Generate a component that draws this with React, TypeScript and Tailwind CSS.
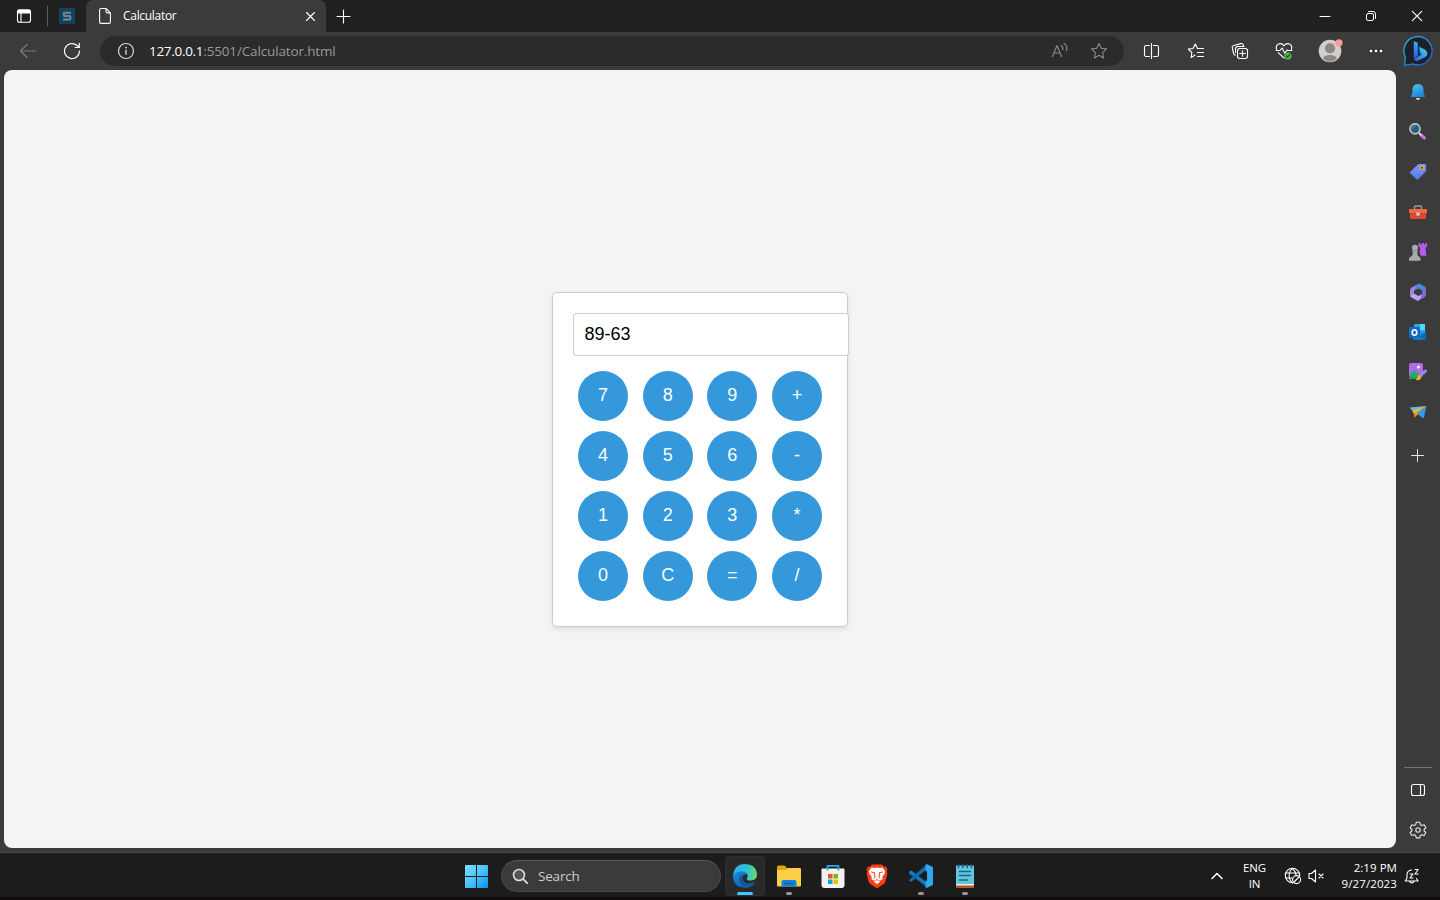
import React from "react";

type IconProps = { w: number; h: number; className?: string; children: React.ReactNode };

function Icon({ w, h, className = "text-white", children }: IconProps) {
  return (
    <svg
      width={w}
      height={h}
      viewBox={`0 0 ${w} ${h}`}
      className={`block shrink-0 ${className}`}
      fill="none"
      stroke="currentColor"
      strokeWidth="1.1"
      strokeLinecap="round"
      strokeLinejoin="round"
    >
      {children}
    </svg>
  );
}

function TabStrip() {
  return (
    <header className="flex h-8 w-full bg-[#202020]">
      <div className="flex w-[86px] items-center">
        <div className="flex w-12 items-center justify-center">
          <Icon w={16} h={16}>
            <rect x="1.5" y="1.8" width="13" height="12.4" rx="2" />
            <path d="M2 2.6h12v2.4H2z" fill="currentColor" />
            <path d="M5 5v9" />
          </Icon>
        </div>
        <div className="-ml-px h-5 w-px bg-[#5c5c5c]" />
        <div className="ml-[11px] flex h-4 w-4 items-center justify-center bg-[#12425f]">
          <Icon w={16} h={16} className="text-[#7b8790]">
            <path d="M12 4.7H5.700q-.9 0-.9.900v1.500q0 .9.900.9h4.800q.9 0 .9.900v1.700q0 .9-.9.900H4" strokeWidth="2" strokeLinecap="butt" />
          </Icon>
        </div>
      </div>
      <div className="flex w-[240px] items-center rounded-t-[7px] bg-[#3b3b3b] pl-3">
        <Icon w={14} h={18}>
          <path d="M3 1.500h5l4.400 4.400v9.100q0 1.400-1.400 1.400H3q-1.400 0-1.400-1.400V2.900Q1.600 1.500 3 1.500zM8 1.700v3q0 1.200 1.200 1.200h3" />
        </Icon>
        <span className="ml-[11px] w-[180px] font-['Open_Sans',sans-serif] text-[12px] leading-4 tracking-[-0.3px] text-white">
          Calculator
        </span>
        <Icon w={14} h={14}>
          <path d="m3.500 3.500 8 8m0-8-8 8" />
        </Icon>
      </div>
      <div className="flex w-[35px] items-center justify-center">
        <Icon w={15} h={15}>
          <path d="M7.500 1v13M1 7.500h13" />
        </Icon>
      </div>
      <div className="ml-auto flex">
        <div className="flex w-[46px] items-center justify-center">
          <Icon w={12} h={12}><path d="M1 6.500h10" strokeWidth="1" /></Icon>
        </div>
        <div className="flex w-[46px] items-center justify-center">
          <Icon w={12} h={12}>
            <rect x="1.500" y="3.500" width="7" height="7" rx="1.500" strokeWidth="1" />
            <path d="M3.500 1.500H8q2.500 0 2.500 2.500v4.500" strokeWidth="1" />
          </Icon>
        </div>
        <div className="flex w-[46px] items-center justify-center">
          <Icon w={12} h={12}><path d="m1.300 1.300 9.400 9.400m0-9.400-9.400 9.400" /></Icon>
        </div>
      </div>
    </header>
  );
}

function Toolbar() {
  return (
    <div className="flex h-[38px] w-full items-center bg-[#3b3b3b]">
      <div className="flex w-14 justify-center">
        <Icon w={18} h={16} className="text-[#7c7c7c]"><path d="M17 8H1.500M8 1.500 1.500 8 8 14.500" /></Icon>
      </div>
      <div className="flex w-8 justify-center">
        <Icon w={18} h={18}>
          <path d="M16.500 9A7.500 7.500 0 1 1 13.800 3.300L16 5.300M16.300 1.300v4.200h-4.200" strokeWidth="1.200" />
        </Icon>
      </div>
      <div className="ml-3 flex h-[30px] w-[1024px] items-center rounded-full bg-[#2b2b2b] pl-[17px] pr-4">
        <Icon w={18} h={18} className="text-[#d8d8d8]">
          <circle cx="9" cy="9" r="7.500" strokeWidth="1.200" />
          <path d="M9 8.200v4" strokeWidth="1.300" />
          <circle cx="9" cy="5.600" r=".4" />
        </Icon>
        <span className="ml-[14px] whitespace-nowrap font-['Open_Sans',sans-serif] text-[13.5px] leading-5 tracking-[-0.15px] text-[#999]">
          <span className="tracking-[-0.3px] text-white">127.0.0.1</span>:5501/Calculator.html
        </span>
        <div className="ml-auto flex items-center gap-[21px]">
          <Icon w={18} h={18} className="text-[#8c8c8c]">
            <path d="m1.500 14.500 4.500-11 4.500 11M3 11h6M10 3.500q2.400 1.500 1.800 4.300M13 1.500q4.300 2.800 2.300 7.300" />
          </Icon>
          <Icon w={18} h={18} className="text-[#8c8c8c]">
            <path d="m9 1.500 2.200 4.800 5.300.6-3.900 3.700 1 5.400L9 13.300 4.400 16l1-5.400-3.900-3.700 5.300-.6z" />
          </Icon>
        </div>
      </div>
      <div className="ml-[6px] flex w-11 items-center justify-center">
        <Icon w={18} h={18}>
          <path d="M6.500 3.500H3.300q-1.800 0-1.800 1.800v7.400q0 1.800 1.800 1.800h3.200M10.500 3.500h3.200q1.800 0 1.800 1.800v7.400q0 1.800-1.800 1.800h-3.200M8.500 1.500v15" />
        </Icon>
      </div>
      <div className="flex w-11 items-center justify-center">
        <Icon w={18} h={18}>
          <path d="M8 13 4.200 15.600 4.800 10.500 1.300 7.100 6 6.500 8.300 2l2.200 4.500h6M10.500 10.500h6M10.500 14.500h6" />
        </Icon>
      </div>
      <div className="flex w-11 items-center justify-center">
        <Icon w={18} h={18}>
          <path d="M4.200 13.200q-1.400-.6-1.700-2L1.300 5.800q-.4-1.900 1.500-2.300l7-1.900q1.900-.4 2.500 1.400l.2.700" />
          <rect x="6.500" y="6.500" width="10" height="10" rx="2.200" />
          <path d="M11.500 8.700v5.600M8.700 11.500h5.600M4.500 10.500V6.800q0-2.300 2.300-2.300h6.200" />
        </Icon>
      </div>
      <div className="flex w-11 items-center justify-center">
        <Icon w={18} h={18}>
          <path d="M1.600 7.500C-.2 2 6-.4 9 3.800c3-4.200 9.200-1.800 7.400 3.700M3.200 10.600 9 16M1 8.500h4L7 6l2.800 5.300L12 8l1 .5h4" />
          <circle cx="12.900" cy="14" r="3.500" fill="#4caf50" stroke="#4caf50" strokeWidth=".5" />
          <path d="m11.500 14 1 1 2-2.200" stroke="#1d4a20" />
        </Icon>
      </div>
      <div className="flex w-12 items-center justify-center">
        <Icon w={26} h={26}>
          <circle cx="13" cy="13" r="11.300" fill="#d1cfcc" stroke="none" />
          <circle cx="13" cy="10.300" r="5.100" fill="#8c8884" stroke="none" />
          <path d="M6 20.500Q7 17 13 17t7 3.500Q13 27.200 6 20.500z" fill="#8c8884" stroke="none" />
          <circle cx="22" cy="4.800" r="3.600" fill="#ff9b91" stroke="none" />
        </Icon>
      </div>
      <div className="flex w-11 items-center justify-center">
        <Icon w={16} h={6}>
          <g fill="currentColor" stroke="none"><circle cx="3" cy="3" r="1.300" /><circle cx="8" cy="3" r="1.300" /><circle cx="13" cy="3" r="1.300" /></g>
        </Icon>
      </div>
      <div className="flex w-[42px] items-center justify-center">
        <Icon w={32} h={32}>
          <defs>
            <linearGradient id="ring" x1="0" y1="0" x2="1" y2="1"><stop stopColor="#25c8ed" /><stop offset="1" stopColor="#2353dc" /></linearGradient>
            <linearGradient id="stem" x1="0" y1="0" x2="0" y2="1"><stop stopColor="#2cb5f5" /><stop offset="1" stopColor="#2458ee" /></linearGradient>
            <linearGradient id="bowl" x1="0" y1="1" x2="1" y2="0"><stop stopColor="#2558ed" /><stop offset="1" stopColor="#3bdcf0" /></linearGradient>
          </defs>
          <path d="M1.600 30.200 2.300 22A14.100 14.100 0 1 1 9.500 28.800q-3.500 1.600-7.900 1.400z" fill="#1e2228" stroke="url(#ring)" strokeWidth="1.300" />
          <path d="m10.800 6.200 4 1.500v13l-4 3.300z" fill="url(#stem)" stroke="none" />
          <path d="m16 11.800 5 2.200q3.300 1.700 3.300 4.800 0 2-1.900 3.200L14.500 26q-2.300.6-3.700-2l7.300-4.300-1.300-2.800z" fill="url(#bowl)" stroke="none" />
        </Icon>
      </div>
    </div>
  );
}

const keys = ["7", "8", "9", "+", "4", "5", "6", "-", "1", "2", "3", "*", "0", "C", "=", "/"];

function CalculatorPage() {
  return (
    <main className="flex h-[778px] w-[1392px] items-center justify-center rounded-lg bg-[#f4f4f4] font-['Liberation_Sans',sans-serif]">
      <section className="mt-[1px] h-[335px] w-[296px] rounded-[5px] border border-[#ccc] bg-white pl-5 pt-5 shadow-[0_2px_5px_rgba(0,0,0,0.1)]">
        <div className="flex h-[43px] w-[276px] items-center rounded-[3px] border border-[#ccc] bg-white px-[10.5px] pb-[2px] text-[18px] leading-none text-black">
          89-63
        </div>
        <div className="ml-[5px] mt-[15px] grid w-[244px] grid-cols-[repeat(4,50px)] justify-between gap-y-[10px]">
          {keys.map((key) => (
            <button key={key} className="h-[50px] w-[50px] rounded-full bg-[#3498db] pb-[3px] text-center text-[18px] leading-5 text-white">
              {key}
            </button>
          ))}
        </div>
      </section>
    </main>
  );
}

function SideItem({ children }: { children: React.ReactNode }) {
  return <div className="flex h-10 items-center pt-1">{children}</div>;
}

function Sidebar() {
  return (
    <aside className="flex h-full w-11 flex-col items-center bg-[#3b3b3b]">
      <SideItem>
        <Icon w={18} h={18}>
          <defs><linearGradient id="bell" x2=".5" y2="1"><stop stopColor="#4fc5f7" /><stop offset="1" stopColor="#1d86d9" /></linearGradient></defs>
          <path d="M2 13.300 3.400 10V7q.2-5.800 5.600-6 5.400.2 5.600 6v3l1.400 3.300q0 .8-.8.8H2.800q-.8 0-.8-.8z" fill="url(#bell)" stroke="none" />
          <path d="M6.800 15h4.400q-.4 2-2.200 2t-2.200-2z" fill="#d5d5d5" stroke="none" />
        </Icon>
      </SideItem>
      <SideItem>
        <Icon w={18} h={18}>
          <path d="m12 12 3.500 3" stroke="#cc70ea" strokeWidth="3" />
          <path d="m10 10 2 1.800" stroke="#ddd" strokeWidth="1.800" />
          <circle cx="6" cy="5.800" r="5" fill="#235f7e" stroke="#bbbdbd" strokeWidth="1.700" />
          <path d="M3.500 5.500Q4 3 6.500 3" stroke="#4b94b6" />
        </Icon>
      </SideItem>
      <SideItem>
        <Icon w={18} h={18}>
          <defs><linearGradient id="tag" x1="1" y2="1"><stop stopColor="#8594f6" /><stop offset="1" stopColor="#527ced" /></linearGradient></defs>
          <path d="m1.400 8.700 7.500-7.100q.7-.7 1.700-.7l5 .1q1.500 0 1.500 1.500L17 7.500q0 .9-.7 1.600l-6.900 7q-1 1-2 0l-6-5.500q-1-.9 0-1.900z" fill="url(#tag)" stroke="none" />
          <circle cx="13" cy="4.800" r="1.700" fill="#343c70" stroke="#eabd2d" />
        </Icon>
      </SideItem>
      <SideItem>
        <Icon w={18} h={18}>
          <path d="M5.500 6V4q0-1 1-1h5q1 0 1 1v2" stroke="#9c9c9c" strokeWidth="1.400" />
          <rect x="0" y="6" width="18" height="4.500" rx="1" fill="#f16740" stroke="none" />
          <path d="M1 10.500h16v4q0 1.500-1.500 1.500h-13Q1 16 1 14.500z" fill="#d9492d" stroke="none" />
          <path d="M7.200 9.500h3.600V12q-1.800 1.700-3.600 0z" fill="#ccc" stroke="none" />
        </Icon>
      </SideItem>
      <SideItem>
        <Icon w={18} h={18}>
          <g fill="#aaa" stroke="none"><circle cx="6" cy="4.800" r="3" /><path d="M3 7.500h6v1.300H8l.8 3.700 2.700 2.500v2.700H0v-2.700l3.300-2.500.8-3.700H3z" /></g>
          <path d="M9.500 0h2v1.500H13V0h2v1.500h1.300V0H18v3.500l-1.500 1.300.8 8H12l-1.300-2.500.5-5.500-1.700-1.300z" fill="#b45bf0" stroke="none" />
        </Icon>
      </SideItem>
      <SideItem>
        <Icon w={18} h={18}>
          <path d="M10.300.5 3 4.300Q1 5.300 1 7.500v5l4-1.900V7.500L10 5z" fill="#9b85df" stroke="none" />
          <path d="m10.300.5 5 2.800Q17 4.300 17 6v3.500L9 5 5 7.200 7.800 2z" fill="#468bd9" stroke="none" />
          <path d="M17 6v6q0 1.500-1.500 2.300L9 18l1-5 3.200-2V7z" fill="#7a6fd0" stroke="none" />
          <path d="m1 12.500 4-2L9.500 13l3.500-2-1.200 4L9 18l-6-3.300Q1 13.700 1 12.500z" fill="#c3a2f1" stroke="none" />
          <path d="m5.500 8 4-2 3.500 2v3l-3.700 1.500-3.800-2z" fill="#373c49" stroke="none" />
        </Icon>
      </SideItem>
      <SideItem>
        <Icon w={18} h={18}>
          <rect x="5" y="1" width="11" height="11" rx="1" fill="#28a8ea" stroke="none" />
          <path d="M11 1h4q1 0 1 1v5h-5z" fill="#50d9ff" stroke="none" />
          <path d="M4 9h13v6q0 1.500-1.500 1.500H4z" fill="#1490df" stroke="none" /><path d="m17 9-7 5 6 2.500h1z" fill="#1166ad" stroke="none" />
          <rect x="0" y="4" width="11" height="11" rx="1" fill="#0f6cbd" stroke="none" />
          <ellipse cx="5.500" cy="9.500" rx="2.300" ry="2.700" strokeWidth="1.600" />
        </Icon>
      </SideItem>
      <SideItem>
        <Icon w={18} h={18}>
          <rect x="0" y="0" width="14" height="14" rx="2" fill="#b16ae9" stroke="none" />
          <circle cx="9.500" cy="4" r="1.500" fill="#fff" stroke="none" />
          <path d="m0 12 4-4q1.500-1.500 3 0l5 5-1 1H2q-2 0-2-2z" fill="#2da86b" stroke="none" />
          <path d="M.5 15.500q4-1.500 7.500 0" stroke="#27b56f" strokeWidth="1.400" />
          <path d="m11.500 12 5-4" stroke="#9389ea" strokeWidth="3" />
          <path d="M9.500 12q3 0 2.700 3-1 3-5.700 2 1.800-.8 1.600-2.500.2-1.500 1.400-2.500z" fill="#efad29" stroke="none" />
        </Icon>
      </SideItem>
      <SideItem>
        <Icon w={18} h={18}>
          <path d="M.5 4.500 17.500 3 5.200 9.500z" fill="#63b9ef" stroke="none" />
          <path d="M17.500 3 3.200 7.800l2 3.700z" fill="#eeb82c" stroke="none" />
          <path d="M17.500 3 5.200 11v3.800L9 11.300z" fill="#d5982d" stroke="none" />
          <path d="M17.500 3 8 10.500 13.500 15q1 .5 1.500-1z" fill="#349bec" stroke="none" />
        </Icon>
      </SideItem>
      <div className="mr-px flex h-[47px] items-center pt-[3px]">
        <Icon w={13} h={13} className="text-[#e4e4e4]"><path d="M6.500.5v12M.5 6.500h12" strokeWidth="1" /></Icon>
      </div>
      <div className="mt-[290px] h-px w-7 bg-[#747474]" />
      <div className="mt-[14px]"><Icon w={16} h={16}><rect x="1.500" y="2.500" width="13" height="11" rx="2" /><path d="M10.500 2.500v11" /></Icon></div>
      <div className="mt-[23px]">
        <Icon w={18} h={18} className="text-[#e8e8e8]">
          <path d="M7.300 1.200h3.400l.6 2.400 1.500.9 2.400-.7 1.700 3-1.800 1.700v1.300l1.700 1.700-1.700 3-2.300-.7-1.500.8-.6 2.300H7.300l-.6-2.300-1.500-.8-2.400.7-1.700-3 1.800-1.700V8.500L1.200 6.800l1.700-3 2.300.7 1.500-.9z" />
          <circle cx="9" cy="9" r="2.200" />
        </Icon>
      </div>
    </aside>
  );
}

function TaskApp({ children, active = false, running = false }: { children: React.ReactNode; active?: boolean; running?: boolean }) {
  return (
    <div className="flex w-11 justify-center">
      <div className={active ? "flex h-10 w-10 flex-col items-center rounded border border-[#303030] bg-[#292929] pt-[6px]" : "flex h-10 w-10 flex-col items-center pt-[7px]"}>
        {children}
        {(active || running) && <div className={active ? "mt-[3px] h-[3px] w-4 rounded-full bg-[#4cc2ff]" : "mt-[3px] h-[3px] w-[6px] rounded-full bg-[#969696]"} />}
      </div>
    </div>
  );
}

function Taskbar() {
  return (
    <footer className="flex h-[47px] w-full border-b-[3px] border-[#130d11] bg-[#1c1c1c] pt-[3px]">
      <div className="ml-[465px] mt-[9px]">
        <Icon w={23} h={23}>
          <defs><linearGradient id="win" gradientUnits="userSpaceOnUse" x1="0" y1="0" x2="23" y2="23"><stop stopColor="#84dcfa" /><stop offset=".5" stopColor="#48c4f8" /><stop offset="1" stopColor="#0893f4" /></linearGradient></defs>
          <path d="M0 1q0-1 1-1h10v11H0zM12 0h10q1 0 1 1v10H12zM0 12h11v11H1q-1 0-1-1zM12 12h11v10q0 1-1 1H12z" fill="url(#win)" stroke="none" />
        </Icon>
      </div>
      <div className="ml-[13px] mt-1 flex h-8 w-[220px] items-center rounded-full border border-[#464646] border-t-[#575757] bg-[#3b3b3b] pl-[10px]">
        <Icon w={17} h={17} className="text-[#dedede]"><circle cx="7" cy="7" r="5.500" fill="#555" strokeWidth="1.600" /><path d="m11.200 11.200 4 4" strokeWidth="1.800" /></Icon>
        <span className="ml-[9px] font-['Open_Sans',sans-serif] text-[13.5px] leading-5 tracking-[-0.2px] text-[#cecece]">Search</span>
      </div>
      <div className="ml-[2px] flex">
        <TaskApp active>
          <Icon w={26} h={26}>
            <defs>
              <linearGradient id="edgeTop" x1="0" y1=".5" x2="1" y2=".6"><stop stopColor="#2faee4" /><stop offset=".55" stopColor="#2fc1d8" /><stop offset="1" stopColor="#68dc67" /></linearGradient>
              <linearGradient id="edgeBase" x2="1" y2="1"><stop stopColor="#1b93e2" /><stop offset="1" stopColor="#0b519a" /></linearGradient>
            </defs>
            <path d="M1 13.500C1.500 4 14 4 15 11q-5 1-4.500 5 .6 7 12.500 3-3.700 6-10 6Q1.500 24 1 13.500z" fill="url(#edgeBase)" stroke="none" />
            <path d="M1 13Q2 1.200 13 1q11 .2 12 10 .2 6.500-6.700 6.500-4.300 0-3.300-2 1.700-2.200.1-4.600C12.600 7 4 7.300 1 13z" fill="url(#edgeTop)" stroke="none" />
            <path d="M10 11.500Q5.500 14 8 20q2 4 6 4.800 6-.3 9-5.300-8.500 3-11.400-1.300Q10 15.500 12 12z" fill="#15589f" stroke="none" />
          </Icon>
        </TaskApp>
        <TaskApp running>
          <Icon w={26} h={26}>
            <path d="M1 4q0-1.500 1.500-1.500h6L11 5h12.500Q25 5 25 6.500V12H1z" fill="#e4a313" stroke="none" />
            <path d="M1 7h8.500L12 5h11.500Q25 5 25 6.500v16q0 1-1 1H2q-1 0-1-1z" fill="#ffce48" stroke="none" />
            <path d="M5.500 23.500V19q0-2 2-2h11q2 0 2 2v4.500z" fill="#1681d8" stroke="none" /><path d="M9 20.500h8" stroke="#0b5eb4" strokeWidth="1.500" />
          </Icon>
        </TaskApp>
        <TaskApp>
          <Icon w={26} h={26}>
            <path d="M1.500 6.500q0-1 1-1h21q1 0 1 1V22q0 3-3 3h-17q-3 0-3-3z" fill="#f2f2f2" stroke="none" />
            <path d="M7.500 7.500V2.800h11v4.700" stroke="#25a9eb" strokeWidth="1.700" strokeLinecap="butt" />
            <path d="M8 11h4.500v4.500H8z" fill="#f25022" stroke="none" /><path d="M13.500 11H18v4.500h-4.500z" fill="#7fba00" stroke="none" /><path d="M8 16.500h4.500V21H8z" fill="#00a4ef" stroke="none" /><path d="M13.500 16.500H18V21h-4.500z" fill="#ffb900" stroke="none" />
          </Icon>
        </TaskApp>
        <TaskApp>
          <Icon w={26} h={26}>
            <path d="M8 1.500h10l2 2.200 2-.1 1.600 3-.7 1.800.5 2-2 8.200q-.4 1.500-1.700 2.500L13 25.500l-6.700-4.400q-1.300-1-1.700-2.500l-2-8.200.5-2-.7-1.800L4 3.600l2 .1z" fill="#fb3d16" stroke="none" />
            <path d="m7.500 4.500 3 .6 2.500-.6 2.500.6 3-.6L21 8l-.3 2.500-2.500 3.500.5 2-2.700 1.800-3-1.500-3 1.500L7.300 16l.5-2-2.500-3.500L5 8z" fill="#fff" stroke="none" />
            <path d="m9.800 18.600 3.200-1.700 3.200 1.700L13 21.200z" fill="#fff" stroke="none" />
            <path d="m7.500 9 3.300.8-.6 2 .9 2.400-1 1.100M18.500 9l-3.300.8.6 2-.9 2.400 1 1.100" stroke="#fb3d16" strokeWidth="1" />
          </Icon>
        </TaskApp>
        <TaskApp running>
          <Icon w={26} h={26}>
            <path d="m1 9 2-1.700 17 13V25L1 10.500z" fill="#1278be" stroke="none" />
            <path d="m1 17 18-16v5L3 19l-2-1.500z" fill="#0e6cac" stroke="none" />
            <path d="m18.500 1 5.500 2.500q1 .4 1 1.500v16q0 1-1 1.500L18.500 25l-1-1V2z" fill="#2ba8ef" stroke="none" />
            <path d="M19 7.700v10.600L12.200 13z" fill="#1c1c1c" stroke="none" />
          </Icon>
        </TaskApp>
        <TaskApp running>
          <Icon w={26} h={26}>
            <path d="M4 2.500h18V22H4z" fill="#61c7dd" stroke="none" /><path d="M4 21h18v2H4z" fill="#eee" stroke="none" /><path d="M4 22.500h18V25H4z" fill="#b35b25" stroke="none" />
            <path d="M7.500 8.500h11M7.500 12.500h11M7.500 17h8" stroke="#12688e" strokeWidth="1.500" />
            <path d="M6.500 1.500v3M10.800 1.500v3M15.200 1.500v3M19.500 1.500v3" stroke="#185875" strokeWidth="1.400" />
          </Icon>
        </TaskApp>
      </div>
      <div className="ml-auto flex h-10 items-center font-['Open_Sans',sans-serif] text-[11.5px] leading-4 text-white">
        <Icon w={14} h={14}><path d="m2 9.500 5-5 5 5" strokeWidth="1.500" /></Icon>
        <div className="ml-[18px] w-[25px] whitespace-nowrap text-center tracking-[-0.1px]">ENG<br />IN</div>
        <div className="ml-[17px]">
          <Icon w={18} h={18}>
            <circle cx="8.500" cy="8.500" r="7.200" /><path d="M1.500 6h14M1.500 11h7M8.500 16C4 12 4 5 8.500 1.300 11.300 4 12 6 12 8" />
            <circle cx="12.600" cy="12.600" r="4" fill="#1c1c1c" /><path d="m10 15 5-5" />
          </Icon>
        </div>
        <div className="ml-[5px]">
          <Icon w={18} h={16}><path d="M2 5.500h2.500L8.500 2v12l-4-3.500H2zM12 6l4 4m0-4-4 4" /></Icon>
        </div>
        <div className="ml-[15px] w-[57px] whitespace-nowrap text-right">
          <div className="tracking-[0.05px]">2:19 PM</div>
          <div className="-ml-1 tracking-[0.12px]">9/27/2023</div>
        </div>
        <div className="ml-[7px] mr-5">
          <Icon w={16} h={16}>
            <path d="M7.500 2Q3 2.500 3 7v3L1.200 13H14l-1.500-2.500M5.500 13q.5 2 2.200 2t2.200-2" />
            <path d="M6 6h3l-3 4h3M11 1.500h3.200L11 6h3.200" />
          </Icon>
        </div>
      </div>
    </footer>
  );
}

export default function App() {
  return (
    <div className="flex h-[900px] w-[1440px] flex-col overflow-hidden bg-[#3b3b3b]">
      <TabStrip />
      <Toolbar />
      <div className="flex h-[783px] border-b border-[#454545]">
        <div className="w-[1396px] pl-1"><CalculatorPage /></div>
        <Sidebar />
      </div>
      <Taskbar />
    </div>
  );
}
